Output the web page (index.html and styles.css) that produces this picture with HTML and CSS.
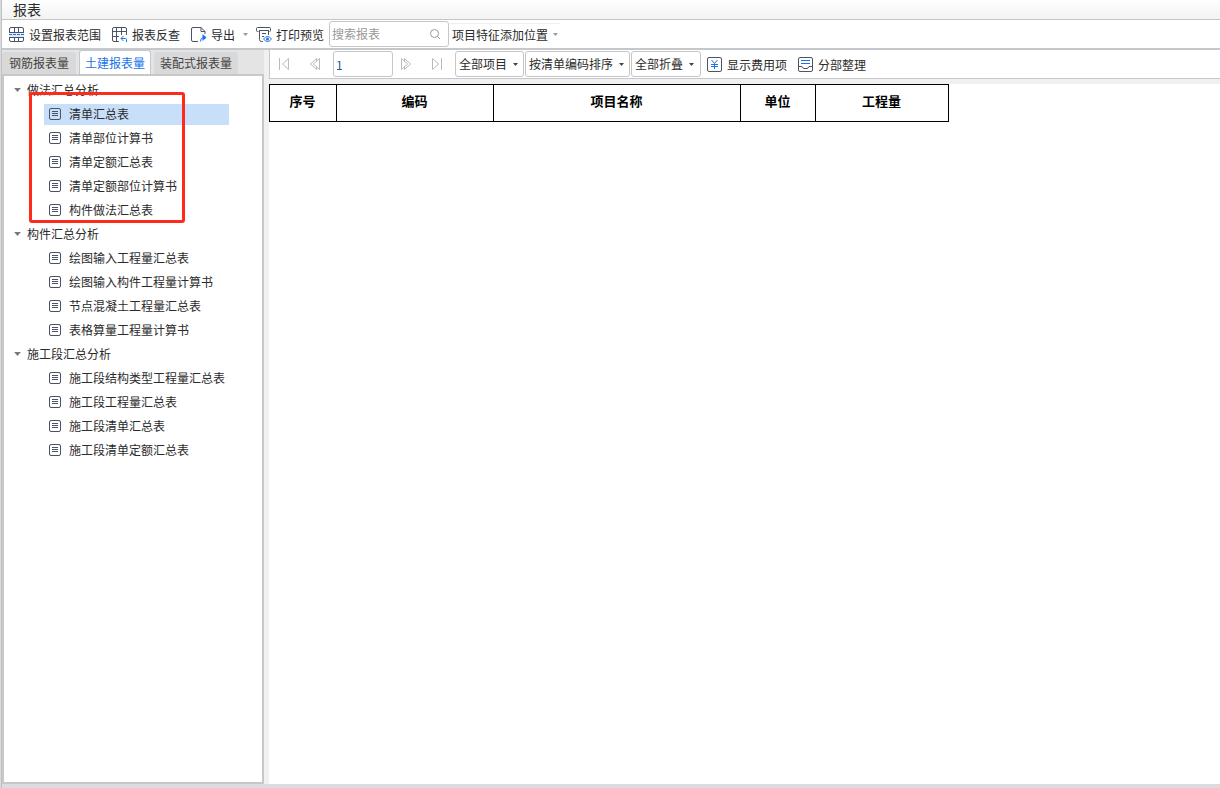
FILE: index.html
```html
<!DOCTYPE html>
<html lang="zh-CN">
<head>
<meta charset="utf-8">
<title>报表</title>
<link rel="stylesheet" href="styles.css">
</head>
<body>
<svg class="defs" aria-hidden="true">
  <symbol id="doc" viewBox="0 0 12 12"><rect x=".5" y=".5" width="11" height="11" rx="1.500"/><path d="M3 3.500h6M3 5.500h6M3 7.500h6"/></symbol>
  <symbol id="caret" viewBox="0 0 5 3"><path d="M0 0h5L2.500 3z"/></symbol>
</svg>
<div class="window">
  <header class="titlebar"><h1>报表</h1></header>
  <div class="toolbar">
    <button class="tool tool-range"><svg class="icon" viewBox="0 0 16 16"><path class="band" d="M0 6h15v4H0z"/><path d="M.5 6V2q0-1.500 1.500-1.500h11q1.500 0 1.500 1.500v4M5.500.5V6M9.500.5V6M.5 10v3q0 1.500 1.500 1.500h11q1.500 0 1.500-1.500v-3M5.500 10v4.500M9.500 10v4.500M.5 5.500h14M.5 10.500h14"/><path class="blue" d="M0 7.500h3M4 7.500h3M8 7.500h3M12 7.500h3"/></svg>设置报表范围</button>
    <button class="tool tool-check"><svg class="icon" viewBox="0 0 16 16"><path d="M7 14.500H2q-1.500 0-1.500-1.500V2Q.5.500 2 .5h11q1.500 0 1.500 1.500v6M.5 4.500h14M.5 9.500H7M4.500.5v14M9.500.5V8"/><path class="blue" d="M14.500 15v-2.500q0-1-1-1H9M11.500 9 9 11.500l2.500 2.500"/></svg>报表反查</button>
    <button class="tool tool-export"><svg class="icon" viewBox="0 0 16 16"><path d="M7 14.500H2q-1.500 0-1.500-1.500V2Q.5.500 2 .5h8l4 4V7M10 .5v4h4"/><path class="blue" d="M9.500 14.500q0-4 3-4"/><path class="solid" d="m11.500 7 4 3.500-4 3.500z"/></svg>导出<svg class="caret muted"><use href="#caret"/></svg></button>
    <button class="tool tool-print"><svg class="icon" viewBox="0 0 16 16"><path d="M2.500 4.500h-1q-1 0-1-1v-2q0-1 1-1h12q1 0 1 1v2q0 1-1 1M3 3.500h10M3.500 3.500v9q0 2 2 2H7M12.500 3.500V8M6 6.500h4M6 9.500h2"/><path class="blue" d="M7.500 12q4-5 8 0-4 5-8 0z"/><circle class="solid" cx="11.500" cy="12" r="1.500"/></svg>打印预览</button>
    <label class="search"><input type="text" placeholder="搜索报表" aria-label="搜索报表"><svg viewBox="0 0 12 12"><circle cx="5.500" cy="5.500" r="4"/><path d="m8.500 8.500 2.500 2.500"/></svg></label>
    <button class="feature">项目特征添加位置<svg class="caret muted"><use href="#caret"/></svg></button>
  </div>
  <div class="body">
    <aside class="side">
      <div class="tabs" role="tablist">
        <button class="tab" role="tab">钢筋报表量</button>
        <button class="tab active" role="tab" aria-selected="true">土建报表量</button>
        <button class="tab last" role="tab">装配式报表量</button>
      </div>
      <nav class="tree">
        <span class="mark"></span>
        <button class="group"><svg><use href="#caret"/></svg>做法汇总分析</button>
        <ul>
          <li><a class="selected" href="#"><svg><use href="#doc"/></svg>清单汇总表</a></li>
          <li><a href="#"><svg><use href="#doc"/></svg>清单部位计算书</a></li>
          <li><a href="#"><svg><use href="#doc"/></svg>清单定额汇总表</a></li>
          <li><a href="#"><svg><use href="#doc"/></svg>清单定额部位计算书</a></li>
          <li><a href="#"><svg><use href="#doc"/></svg>构件做法汇总表</a></li>
        </ul>
        <button class="group"><svg><use href="#caret"/></svg>构件汇总分析</button>
        <ul>
          <li><a href="#"><svg><use href="#doc"/></svg>绘图输入工程量汇总表</a></li>
          <li><a href="#"><svg><use href="#doc"/></svg>绘图输入构件工程量计算书</a></li>
          <li><a href="#"><svg><use href="#doc"/></svg>节点混凝土工程量汇总表</a></li>
          <li><a href="#"><svg><use href="#doc"/></svg>表格算量工程量计算书</a></li>
        </ul>
        <button class="group"><svg><use href="#caret"/></svg>施工段汇总分析</button>
        <ul>
          <li><a href="#"><svg><use href="#doc"/></svg>施工段结构类型工程量汇总表</a></li>
          <li><a href="#"><svg><use href="#doc"/></svg>施工段工程量汇总表</a></li>
          <li><a href="#"><svg><use href="#doc"/></svg>施工段清单汇总表</a></li>
          <li><a href="#"><svg><use href="#doc"/></svg>施工段清单定额汇总表</a></li>
        </ul>
      </nav>
    </aside>
    <main class="main">
      <div class="pager">
        <div class="nav">
          <button aria-label="首页"><svg viewBox="0 0 12 14"><path d="M1.500 1v12M10.500 1.500v11L4.500 7z"/></svg></button>
          <button aria-label="上一页"><svg viewBox="0 0 12 14"><path d="M7.500 1.500v3M7.500 9.500v3M7.500 1.500 1.500 7l6 5.500M10.500 1.500v11L4.500 7z"/></svg></button>
          <input type="text" value="1" aria-label="页码">
          <button aria-label="下一页"><svg viewBox="0 0 12 14"><path d="M4.500 1.500v3M4.500 9.500v3M4.500 1.500l6 5.500-6 5.500M1.500 1.500v11L7.500 7z"/></svg></button>
          <button aria-label="末页"><svg viewBox="0 0 12 14"><path d="M10.500 1v12M1.500 1.500v11L7.500 7z"/></svg></button>
        </div>
        <div class="filters">
          <label class="pick"><select aria-label="项目"><option>全部项目</option></select><svg class="caret"><use href="#caret"/></svg></label>
          <label class="pick"><select aria-label="排序"><option>按清单编码排序</option></select><svg class="caret"><use href="#caret"/></svg></label>
          <label class="pick"><select aria-label="折叠"><option>全部折叠</option></select><svg class="caret"><use href="#caret"/></svg></label>
        </div>
        <button class="action"><svg class="icon" viewBox="0 0 16 16"><rect x=".5" y=".5" width="14" height="14" rx="1.500"/><path class="blue" d="m4.500 3 3 3.500 3-3.500M7.500 6.500V12M4 7.500h7M4 9.500h7"/></svg>显示费用项</button>
        <button class="action"><svg class="icon" viewBox="0 0 16 16"><rect x=".5" y=".5" width="14" height="14" rx="1.500"/><path d="M1 9.500h3q1 2 2 2h3q1 0 2-2h3"/><path class="blue" d="M3 3.500h9M3 6.500h9"/></svg>分部整理</button>
      </div>
      <div class="sheet">
        <table>
          <colgroup><col class="c-no"><col class="c-code"><col class="c-name"><col class="c-unit"><col class="c-qty"></colgroup>
          <thead><tr><th>序号</th><th>编码</th><th>项目名称</th><th>单位</th><th>工程量</th></tr></thead>
        </table>
      </div>
    </main>
  </div>
</div>
</body>
</html>
```
FILE: styles.css
```css
* { box-sizing: border-box; }
body {
  margin: 0;
  background: #dcdcde;
  color: #2b2b2b;
  font: 12px/16px "Noto Sans CJK SC", sans-serif;
}
button, input, select { font: inherit; color: inherit; margin: 0; padding: 0; border: 0; background: none; }
button, label { display: flex; align-items: center; white-space: nowrap; }
svg { display: block; flex: none; fill: none; }
.defs { position: absolute; width: 0; height: 0; }
.window {
  display: flex;
  flex-direction: column;
  height: 100vh;
  margin-left: 1px;
  border-left: 1px solid #c0c0c4;
  padding-bottom: 4px;
}
.titlebar {
  height: 20px;
  padding-left: 11px;
  border-bottom: 1px solid #c6c6c6;
  background: linear-gradient(#fefefe, #f3f3f3);
}
.titlebar h1 { margin: 0; font-size: 14px; font-weight: 400; line-height: 19px; }
.toolbar {
  display: flex;
  height: 30px;
  padding-left: 7px;
  border-bottom: 2px solid #c4c8cd;
  background: #fff;
}
.icon { width: 16px; height: 16px; stroke: #4b5364; }
.icon .blue { stroke: #1a73e8; }
.icon .solid { fill: #1a73e8; stroke: none; }
.icon .band { fill: #dcebfc; stroke: none; }
.tool { gap: 4px; margin-right: 11px; padding-top: 1px; }
.tool-export { margin-right: 8px; }
.tool-export .caret { margin-left: 4px; }
.tool-print { margin-right: 5px; }
.caret { width: 5px; height: 3px; fill: #444; }
.caret.muted { fill: #999; }
.search {
  width: 120px;
  height: 26px;
  padding: 0 7px 0 2px;
  border: 1px solid #c6c6c6;
  border-radius: 3px;
  align-self: center;
}
.search input { flex: 1; min-width: 0; outline: 0; }
.search input::placeholder { color: #999; opacity: 1; }
.search svg { width: 12px; height: 12px; stroke: #999; }
.feature { gap: 5px; height: 22px; margin: 3px 0 0 1px; padding: 0 2px; border-top: 1px solid #eee; }
.body { display: flex; flex: 1; min-height: 0; }
.side { display: flex; flex-direction: column; flex: none; width: 262px; }
.tabs { display: flex; height: 24px; background: #e4e4e4; }
.tab {
  justify-content: center;
  width: 74px;
  height: 22px;
  margin: 2px 3px 0 0;
  border-radius: 3px 3px 0 0;
  background: #d9d9d9;
  color: #444;
}
.tab.active { width: 72px; height: 25px; margin-top: 0; border: 1px solid #c4c8cd; border-bottom: 0; background: #fff; color: #1a73e8; }
.tab.last { width: 84px; }
.tree {
  position: relative;
  flex: 1;
  min-height: 0;
  padding-top: 2px;
  border: 2px solid #c8c8cb;
  background: #fff;
}
.tree ul { margin: 0; padding: 0; list-style: none; }
.group { height: 24px; padding-left: 10px; gap: 6px; }
.group svg { width: 7px; height: 4px; fill: #777; }
.tree li { display: flex; align-items: center; height: 24px; padding: 0 33px 0 40px; }
.tree a {
  display: flex;
  align-items: center;
  flex: 1;
  gap: 8px;
  height: 21px;
  padding-left: 5px;
  color: inherit;
  text-decoration: none;
  white-space: nowrap;
}
.tree a svg { width: 12px; height: 12px; stroke: #4b5364; }
.tree a.selected { background: #c8dffa; }
.mark {
  position: absolute;
  top: 16px;
  left: 25px;
  width: 156px;
  height: 131px;
  border: 3px solid #ff2a1a;
  border-radius: 3px;
}
.main { display: flex; flex-direction: column; flex: 1; min-width: 0; padding-left: 5px; background: #f0f0f0; }
.pager {
  display: flex;
  align-items: center;
  height: 29px;
  border-left: 1px solid #c4c8cd;
  border-bottom: 1px solid #c4c8cd;
  background: #fff;
}
.nav { display: flex; align-items: center; margin: 0 12px 0 8px; }
.nav svg { width: 12px; height: 14px; stroke: #bbb; }
.nav button + button { margin-left: 19px; }
.nav input { width: 60px; height: 26px; margin: 0 7px 0 12px; padding-left: 2px; border: 1px solid #c6c6c6; border-radius: 3px; color: #1b5a9c; }
.filters { display: flex; gap: 1px; margin-right: 6px; }
.pick { height: 26px; padding: 0 5px 0 3px; gap: 5px; border: 1px solid #c6c6c6; border-radius: 3px; }
.pick:last-child { padding-right: 6px; }
.pick select { appearance: none; }
.action { gap: 4px; margin-right: 11px; padding-top: 1px; }
.sheet { flex: 1; margin-top: 5px; background: #fff; }
.sheet table { width: 680px; border-collapse: collapse; table-layout: fixed; }
.sheet th { height: 37px; padding: 0 1px 4px 0; border: 1px solid #000; color: #000; font-size: 13px; font-weight: 700; }
.c-no { width: 67px; }
.c-code { width: 157px; }
.c-name { width: 247px; }
.c-unit { width: 75px; }
.c-qty { width: 133px; }
```
